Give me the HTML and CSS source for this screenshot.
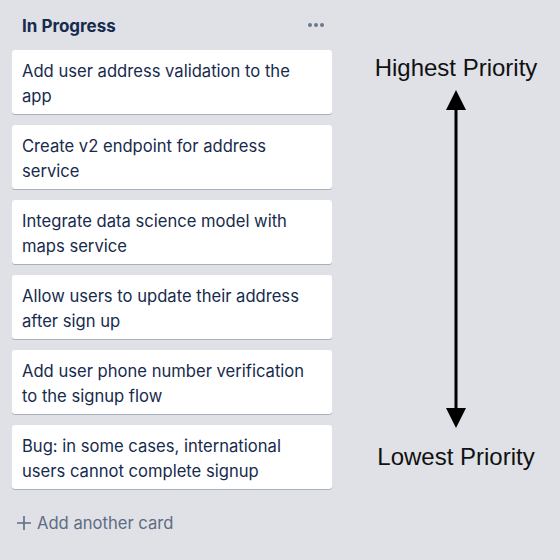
FILE: index.html
```html
<!DOCTYPE html>
<html>
<head>
<meta charset="utf-8">
<link rel="stylesheet" href="styles.css">
</head>
<body>
<div class="board">
  <section class="list">
    <header class="list-header">
      <h2 class="list-title">In Progress</h2>
      <span class="list-menu"><i></i><i></i><i></i></span>
    </header>
    <div class="cards">
      <div class="card">Add user address validation to the app</div>
      <div class="card">Create v2 endpoint for address service</div>
      <div class="card">Integrate data science model with maps service</div>
      <div class="card">Allow users to update their address after sign up</div>
      <div class="card">Add user phone number verification to the signup flow</div>
      <div class="card">Bug: in some cases, international users cannot complete signup</div>
    </div>
    <div class="add-card">
      <svg class="plus" width="16" height="16" viewBox="0 0 16 16"><path d="M8 1v14M1 8h14" stroke="#5e6c84" stroke-width="1.6" fill="none"/></svg>
      <span>Add another card</span>
    </div>
  </section>
  <aside class="priority">
    <div class="prio-label top">Highest Priority</div>
    <svg class="arrow" width="24" height="338" viewBox="0 0 24 338">
      <polygon points="12,0 2,20 22,20" fill="#000"/>
      <rect x="10.5" y="18" width="3" height="302" fill="#000"/>
      <polygon points="12,338 2,318 22,318" fill="#000"/>
    </svg>
    <div class="prio-label bottom">Lowest Priority</div>
  </aside>
</div>
</body>
</html>
```
FILE: styles.css
```css
html, body {
  margin: 0;
  padding: 0;
  background: #dfe1e6;
}
body {
  width: 560px;
  height: 560px;
  overflow: hidden;
  font-family: Inter, "Noto Sans", sans-serif;
  color: #172b4d;
}
.board {
  display: flex;
}
.list {
  width: 320px;
  margin-left: 12px;
}
.list-header {
  height: 50px;
  display: flex;
  align-items: center;
  justify-content: space-between;
  padding: 2px 6px 0 10px;
  box-sizing: border-box;
}
.list-title {
  margin: 0;
  font-size: 17px;
  font-weight: 700;
  color: #172b4d;
}
.list-menu {
  display: flex;
  gap: 2px;
  padding-right: 2px;
  margin-top: -2px;
}
.list-menu i {
  width: 4px;
  height: 4px;
  border-radius: 50%;
  background: #6b778c;
}
.cards {
  display: flex;
  flex-direction: column;
  gap: 11px;
}
.card {
  background: #fff;
  border-radius: 3px;
  box-shadow: 0 1px 0 rgba(9, 30, 66, 0.25);
  padding: 9px 24px 5px 10px;
  font-size: 16.6px;
  line-height: 25px;
  min-height: 50px;
}
.add-card {
  display: flex;
  align-items: center;
  gap: 5px;
  margin-top: 22px;
  padding-left: 4px;
  color: #5e6c84;
  font-size: 16.6px;
  line-height: 24px;
}
.priority {
  flex: 1;
  display: flex;
  flex-direction: column;
  align-items: center;
  padding-left: 20px;
  padding-top: 55px;
}
.prio-label {
  font-family: "Liberation Sans", Arial, sans-serif;
  font-size: 24px;
  line-height: 26px;
  color: #111;
}
.arrow {
  display: block;
  margin-top: 9px;
  margin-bottom: 16px;
}
```
